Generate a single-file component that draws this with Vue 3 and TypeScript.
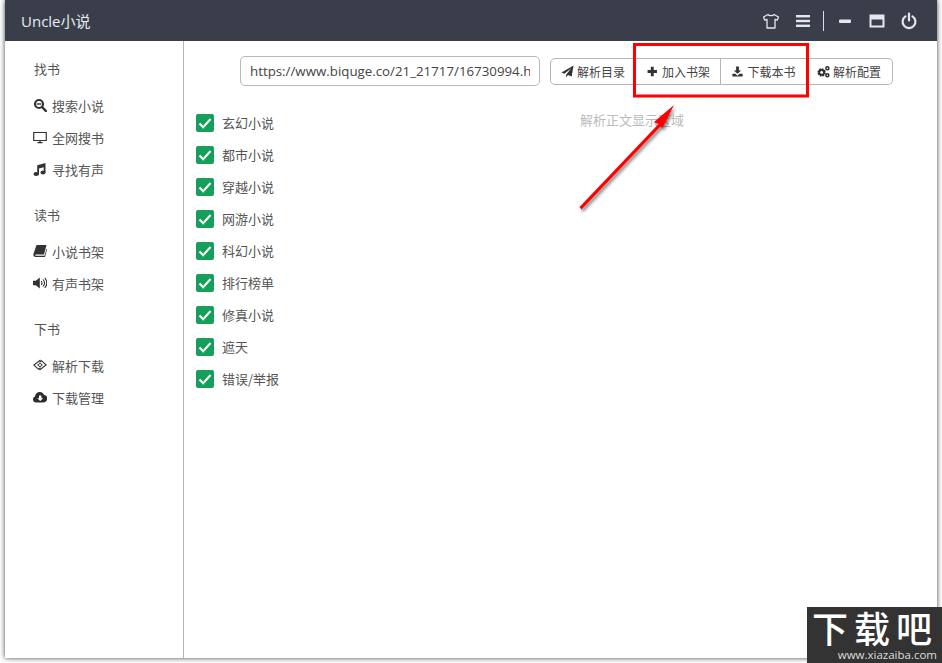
<script setup lang="ts">
const nav = [
  {
    title: '找书',
    items: [
      { label: '搜索小说', icon: 'search' },
      { label: '全网搜书', icon: 'desktop' },
      { label: '寻找有声', icon: 'music' },
    ],
  },
  {
    title: '读书',
    items: [
      { label: '小说书架', icon: 'book' },
      { label: '有声书架', icon: 'volume' },
    ],
  },
  {
    title: '下书',
    items: [
      { label: '解析下载', icon: 'code' },
      { label: '下载管理', icon: 'cloud' },
    ],
  },
];

const categories = ['玄幻小说', '都市小说', '穿越小说', '网游小说', '科幻小说', '排行榜单', '修真小说', '遮天', '错误/举报'];
const url = 'https://www.biquge.co/21_21717/16730994.html';
</script>

<template>
  <div class="page">
    <div class="window">
      <header class="titlebar">
        <span class="brand">Uncle小说</span>
        <div class="controls">
          <svg class="ctl" viewBox="0 0 18 18" fill="none" stroke="#e4e7ee" stroke-width="1.300" stroke-linejoin="round">
            <path d="M6 2.500 1.500 5l1.300 3.200L5 7.400V16h8V7.400l2.200.8L16.500 5 12 2.500c-.6 1.600-5.400 1.600-6 0Z" />
          </svg>
          <svg class="ctl" viewBox="0 0 18 18" fill="#e4e7ee">
            <rect x="2" y="3" width="14" height="2.400" />
            <rect x="2" y="7.800" width="14" height="2.400" />
            <rect x="2" y="12.600" width="14" height="2.400" />
          </svg>
          <span class="divider"></span>
          <svg class="ctl" viewBox="0 0 18 18" fill="#e4e7ee">
            <rect x="3" y="7.500" width="12" height="3.500" rx="1" />
          </svg>
          <svg class="ctl" viewBox="0 0 18 18" fill="#e4e7ee">
            <path d="M1.500 2.500h15v13h-15Zm2 5v6h11v-6Z" fill-rule="evenodd" />
          </svg>
          <svg class="ctl" viewBox="0 0 18 18" fill="none" stroke="#e4e7ee" stroke-width="2.200" stroke-linecap="round">
            <path d="M5.500 4.300a6.400 6.400 0 1 0 7 0" />
            <path d="M9 1.500v7" />
          </svg>
        </div>
      </header>

      <div class="body">
        <aside class="sidebar">
          <section v-for="group in nav" :key="group.title" class="group">
            <h4 class="group-title">{{ group.title }}</h4>
            <a v-for="item in group.items" :key="item.label" class="nav-item">
              <svg class="nav-icon" viewBox="0 0 14 14">
                <template v-if="item.icon === 'search'">
                  <circle cx="6" cy="6" r="4" fill="none" stroke="#333" stroke-width="2.200" />
                  <path d="M3.800 6h4.400" stroke="#333" stroke-width="1.400" />
                  <path d="m9 9 3.800 3.800" stroke="#333" stroke-width="2.400" stroke-linecap="round" />
                </template>
                <template v-else-if="item.icon === 'desktop'">
                  <path d="M.7 2.500h12.600v8H.7Z" fill="none" stroke="#333" stroke-width="1.200" />
                  <path d="M4.500 12.700h5M7 10.500v2" stroke="#333" stroke-width="1.200" />
                </template>
                <template v-else-if="item.icon === 'music'">
                  <path d="M4.200 3.300 12.500 1v9.500h-1.800V5.300L6 6.600v5.800H4.200Z" fill="#333" />
                  <ellipse cx="3.200" cy="12" rx="2.700" ry="1.900" fill="#333" />
                  <ellipse cx="10" cy="10.500" rx="2.500" ry="1.900" fill="#333" />
                </template>
                <template v-else-if="item.icon === 'book'">
                  <path d="M3.500 1h10L11 10.500H3c-.9 0-.9 1.300 0 1.300h8.500l2-7 .5.700-2 7.500H2.500C.7 13 0 11.500.6 9.500Z" fill="#333" />
                </template>
                <template v-else-if="item.icon === 'volume'">
                  <path d="M0 4.800h2.800L6.800 1.500v11L2.800 9.200H0Z" fill="#333" />
                  <path d="M8.200 5c.9 1.200.9 2.800 0 4M10 3.500c1.800 2 1.800 5 0 7M11.800 2c2.400 3 2.400 7 0 10" fill="none" stroke="#333" stroke-width="1.100" />
                </template>
                <template v-else-if="item.icon === 'code'">
                  <path d="M7.500 2 .8 7l4.700 4.300 2-1.600" fill="none" stroke="#333" stroke-width="1.100" />
                  <path d="M6.500 12 13.200 7 8.500 2.700l-2 1.600" fill="none" stroke="#333" stroke-width="1.100" />
                  <path d="M7 5.300 4.700 7 7 8.800 9.300 7Z" fill="none" stroke="#333" stroke-width="1" />
                </template>
                <template v-else>
                  <path d="M3.200 12.500C1.400 12.500 0 11.200 0 9.500c0-1.400.8-2.500 2-2.900C2.200 4 4.200 2 6.800 2c2 0 3.600 1.200 4.300 2.900C12.900 5 14.300 6.500 14.300 8.400c0 2.300-1.800 4.100-4 4.100Z" fill="#2d2d2d" />
                  <path d="M6 5.500h2.400v2.700h1.800L7.200 11 4.200 8.200H6Z" fill="#fff" />
                </template>
              </svg>
              <span class="nav-label">{{ item.label }}</span>
            </a>
          </section>
        </aside>

        <main class="content">
          <div class="toolbar">
            <input class="url" type="text" :value="url" readonly />
            <div class="btn-group">
              <button class="btn">
                <svg class="btn-icon" viewBox="0 0 14 14"><path d="M13.500.5 11.500 12.500 7.500 10.700 5.500 13.500V10.500L11 3.500 3.700 9.500.5 8Z" fill="#333" /></svg>
                解析目录
              </button>
              <button class="btn">
                <svg class="btn-icon" viewBox="0 0 14 14"><path d="M5.200 2h3.100v3.500h3.500v3.100H8.300v3.500H5.200V8.600H1.700V5.500h3.500Z" fill="#333" /></svg>
                加入书架
              </button>
              <button class="btn wide">
                <svg class="btn-icon" viewBox="0 0 14 14"><path d="M5.500 1.500h3v4.300H11L7 9.500 3 5.800h2.500ZM1.500 9.500h3.200L7 11.500l2.300-2h3.200v3h-11Z" fill="#333" /></svg>
                下载本书
              </button>
              <button class="btn last">
                <svg class="btn-icon" viewBox="0 0 14 14">
                  <circle cx="5" cy="8" r="3" fill="none" stroke="#2d2d2d" stroke-width="3" stroke-dasharray="1.700 .6" />
                  <circle cx="5" cy="8" r="2.600" fill="none" stroke="#2d2d2d" stroke-width="1.600" />
                  <circle cx="11.200" cy="3.500" r="1.600" fill="none" stroke="#2d2d2d" stroke-width="1.600" />
                  <circle cx="11.200" cy="11" r="1.600" fill="none" stroke="#2d2d2d" stroke-width="1.600" />
                </svg>
                解析配置
              </button>
            </div>
          </div>

          <div class="panes">
            <ul class="checks">
              <li v-for="name in categories" :key="name" class="check-row">
                <span class="box">
                  <svg viewBox="0 0 18 18" width="18" height="18"><path d="m3.500 9.500 3.700 3.700 7.300-8.200" fill="none" stroke="#fff" stroke-width="2" /></svg>
                </span>
                {{ name }}
              </li>
            </ul>
            <p class="hint">解析正文显示区域</p>
          </div>
        </main>
      </div>
    </div>

    <!-- 截图上的标注 -->
    <svg class="annotation" width="942" height="663" viewBox="0 0 942 663">
      <defs>
        <filter id="soft" x="-20%" y="-20%" width="150%" height="150%">
          <feDropShadow dx="1.500" dy="2.500" stdDeviation="1.500" flood-color="#000" flood-opacity=".5" />
        </filter>
      </defs>
      <rect x="634.500" y="44.500" width="173" height="51.500" fill="none" stroke="#f00" stroke-width="3" />
      <path d="M674 105 654 122 658.500 124 579.500 207 581.500 209.500 660.500 126.500 662.500 128Z" fill="#f00" filter="url(#soft)" />
    </svg>

    <div class="watermark">
      <span class="wm-title">下载吧</span>
      <span class="wm-url">www.xiazaiba.com</span>
    </div>
  </div>
</template>

<style>
html,
body {
  margin: 0;
  background: #fff;
}
</style>

<style scoped>
.page {
  position: relative;
  width: 942px;
  height: 663px;
  overflow: hidden;
  padding: 0 5px 5px;
  box-sizing: border-box;
  font-family: "Noto Sans CJK SC", "Noto Sans", sans-serif;
  color: #444;
}

.window {
  width: 932px;
  height: 658px;
  display: flex;
  flex-direction: column;
  background: #fff;
  box-shadow: 0 0 5px rgba(0, 0, 0, 0.75);
}

.titlebar {
  height: 41px;
  flex: none;
  display: flex;
  align-items: center;
  justify-content: space-between;
  background: #3a3e4b;
  padding: 0 19px 0 16px;
}

.brand {
  color: #e8ecf2;
  font-size: 15px;
  font-family: "Open Sans", "Noto Sans CJK SC", sans-serif;
}

.controls {
  display: flex;
  align-items: center;
  gap: 14px;
}

.ctl {
  width: 18px;
  height: 18px;
}

.divider {
  width: 1px;
  height: 20px;
  background: #d8dce4;
  margin: 0 -2px 0 -3px;
}

.body {
  flex: 1;
  display: flex;
  min-height: 0;
}

.sidebar {
  width: 179px;
  flex: none;
  box-sizing: border-box;
  border-right: 1px solid #b5b5b5;
  padding: 12px 0 0 28px;
}

.group {
  margin-bottom: 14px;
}

.group-title {
  margin: 0 0 4px 1px;
  height: 32px;
  line-height: 32px;
  font-size: 13px;
  font-weight: 400;
  color: #555;
}

.nav-item {
  display: flex;
  align-items: center;
  height: 32px;
  font-size: 13px;
  color: #555;
}

.nav-icon {
  width: 14px;
  height: 14px;
  flex: none;
  margin-right: 5px;
}

.nav-label {
  white-space: nowrap;
}

.content {
  flex: 1;
  min-width: 0;
  padding: 15px 0 0 12px;
}

.toolbar {
  display: flex;
  align-items: center;
  padding-left: 44px;
}

.url {
  width: 300px;
  height: 30px;
  box-sizing: border-box;
  border: 1px solid #b9b9b9;
  border-radius: 5px;
  padding: 0 9px;
  font-family: "Open Sans", sans-serif;
  font-size: 13.300px;
  color: #444;
  outline: none;
}

.btn-group {
  display: flex;
  margin-left: 10px;
}

.btn {
  width: 86px;
  height: 27px;
  margin-left: -1px;
  display: flex;
  align-items: center;
  justify-content: center;
  gap: 3px;
  border: 1px solid #b5b5b5;
  background: #fff;
  padding: 0;
  font-family: "Noto Sans CJK SC", sans-serif;
  font-size: 12px;
  color: #444;
}

.btn:first-child {
  margin-left: 0;
  border-radius: 5px 0 0 5px;
}

.btn.last {
  width: 87px;
  border-radius: 0 5px 5px 0;
  border-left: 0;
}

.btn.wide {
  width: 87px;
}

.btn-icon {
  width: 13px;
  height: 13px;
  flex: none;
}

.panes {
  display: flex;
  margin-top: 20px;
}

.checks {
  list-style: none;
  margin: 0;
  padding: 0;
  width: 384px;
}

.check-row {
  display: flex;
  align-items: center;
  gap: 8px;
  height: 32px;
  font-size: 13px;
  color: #555;
}

.box {
  width: 18px;
  height: 18px;
  border-radius: 2px;
  background: #14a05a;
  display: block;
  margin-top: 2px;
  margin-bottom: 0;
}

.box svg {
  display: block;
}

.hint {
  margin: 4px 0 0;
  font-size: 13px;
  color: #bbb;
}

.annotation {
  position: absolute;
  left: 0;
  top: 0;
  pointer-events: none;
}

.watermark {
  position: absolute;
  right: 0;
  bottom: 0;
  width: 135px;
  height: 56px;
  box-sizing: border-box;
  background: #333;
  color: #fff;
  display: flex;
  flex-direction: column;
}

.wm-title {
  display: block;
  font-size: 36px;
  font-weight: 500;
  height: 41px;
  line-height: 41px;
  letter-spacing: 6px;
  padding-left: 5px;
  white-space: nowrap;
}

.wm-url {
  align-self: flex-end;
  font-family: "Open Sans", sans-serif;
  font-size: 11.500px;
  line-height: 14px;
  color: #ddd;
  padding-right: 5px;
}
</style>
